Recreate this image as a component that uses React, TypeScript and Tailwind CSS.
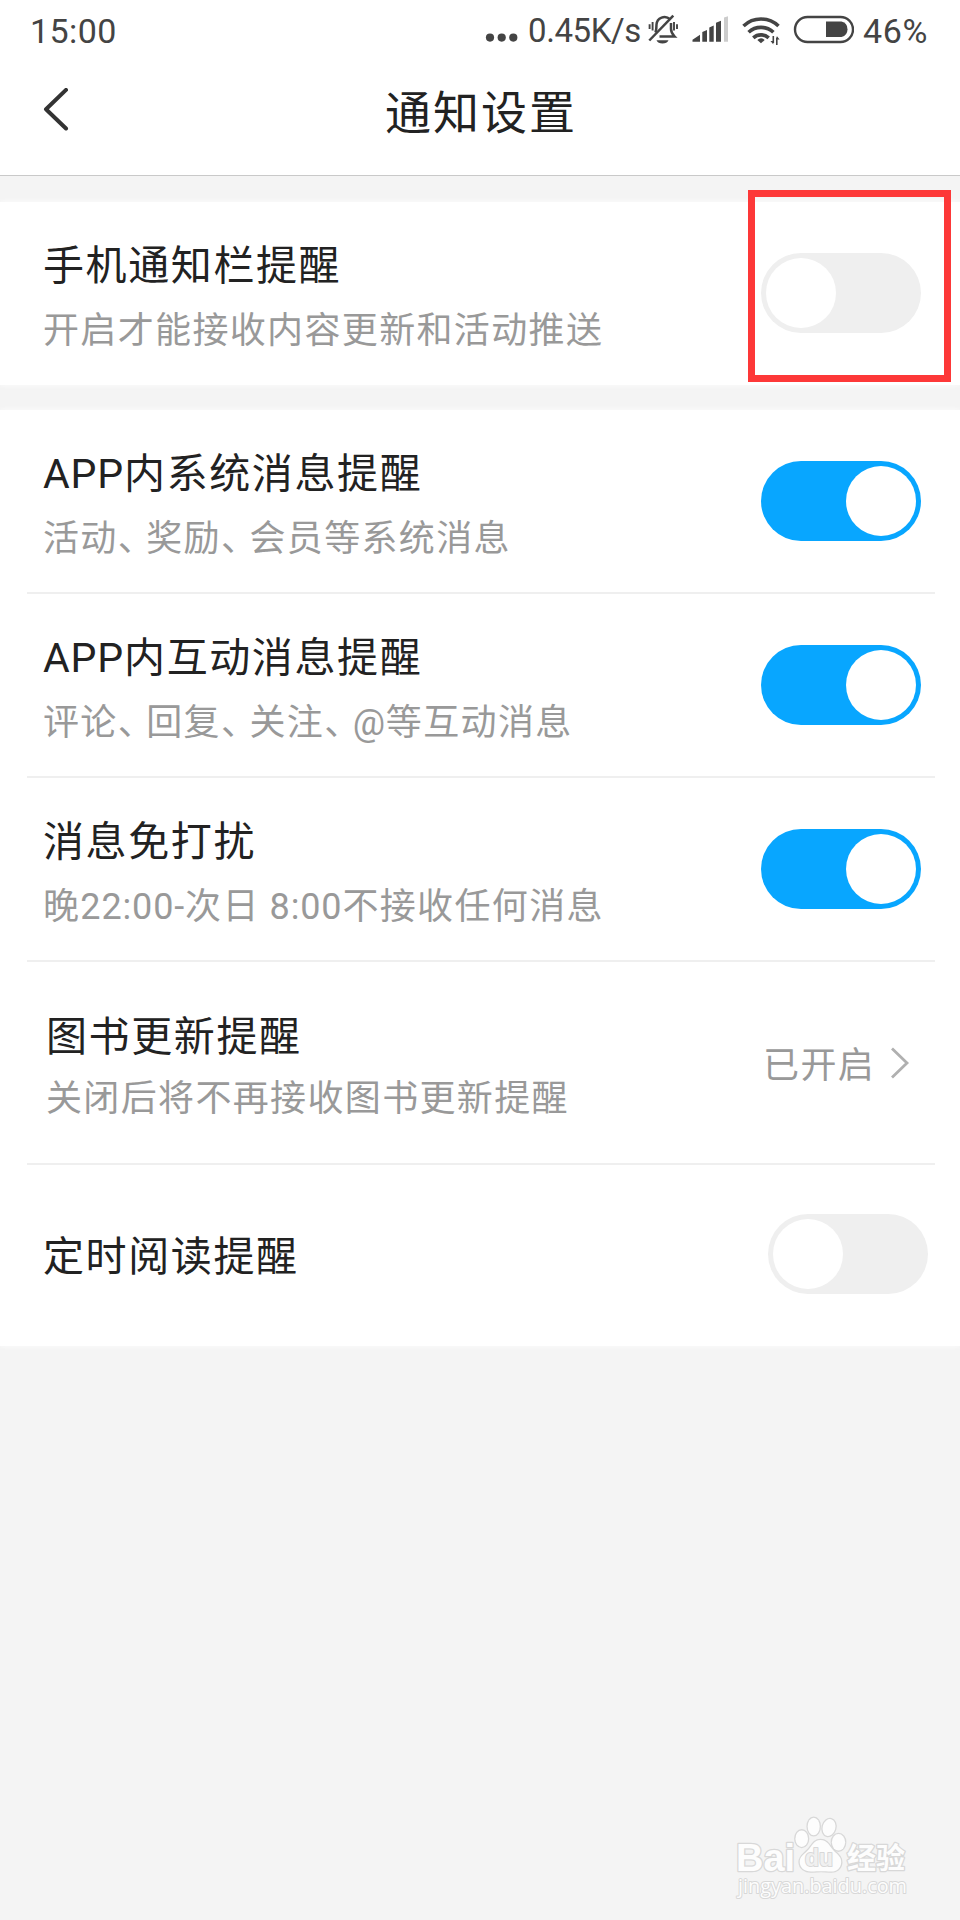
import clsx from "clsx";
import type { ReactNode } from "react";

function Toggle({ on }: { on?: boolean }) {
  return (
    <button
      role="switch"
      aria-checked={!!on}
      className={clsx(
        "w-40 h-20 rounded-full p-[5px] flex items-center flex-shrink-0",
        on ? "bg-[#08a6ff] justify-end" : "bg-[#efefef] justify-start",
      )}
    >
      <span className="w-[70px] h-[70px] rounded-full bg-white" />
    </button>
  );
}

function Divider() {
  return <div className="h-[2px] ml-[27px] mr-[25px] flex-shrink-0 bg-[#efefef]" />;
}

// Chinese commas are set narrower than a full em, latin runs with less tracking
function MixedText({ text }: { text: string }) {
  return (
    <>
      {text.split(/(、|[\x20-\x7e]+)/).map((part, i) => {
        if (part === "、") {
          return (
            <span key={i} className="-tracking-[7.5px]">
              {part}
            </span>
          );
        }
        if (/^[\x20-\x7e]+$/.test(part)) {
          return (
            <span key={i} className="tracking-[0.85px]">
              {part}
            </span>
          );
        }
        return part;
      })}
    </>
  );
}

interface RowProps {
  title: string;
  desc: string;
  className: string;
  children: ReactNode;
}

function Row({ title, desc, className, children }: RowProps) {
  return (
    <div className={clsx("flex justify-between items-center pl-[43px] pr-[39px]", className)}>
      <div className="pt-[11px]">
        <h2 className="text-[41px] leading-[64px] tracking-[1.6px] text-[#222] whitespace-nowrap">
          <MixedText text={title} />
        </h2>
        <p className="text-[36px] leading-[66px] tracking-[1.35px] text-[#999] whitespace-nowrap">
          <MixedText text={desc} />
        </p>
      </div>
      {children}
    </div>
  );
}

function StatusBar() {
  return (
    <div className="h-[60px] flex items-center pl-[30px] text-[34px] leading-[60px] text-[#444]">
      <span className="w-[455px] pt-[2px] tracking-[0.4px]">15:00</span>
      <svg width="33" height="60" viewBox="0 0 33 60" fill="#444">
        <circle cx="5" cy="37.6" r="4.1" />
        <circle cx="16.7" cy="37.6" r="4.1" />
        <circle cx="28.3" cy="37.6" r="4.1" />
      </svg>
      <span className="w-[129px] pl-[10px] pt-[2px] text-[33px] -tracking-[0.4px]">0.45K/s</span>

      {/* Muted bell */}
      <svg width="42" height="60" viewBox="0 0 42 60" fill="none" stroke="#444">
        <path d="M23 19.200a8 8 0 0 0-13.500 5.300c0 3.500-.2 5.500-1 8M24 23v6c0 3 1.200 5 3.600 7.500H12.500" strokeWidth="2.500" />
        <path d="M26.300 15.700 2.300 40.500" strokeWidth="2.500" />
        <path d="M5.600 22v8.500M2.600 24.300v4.700M27 22v8.500M30 24.300v4.700" strokeWidth="1.900" />
        <path d="M9.500 40.200h12q-1.500 3.200-6 3.200t-6-3.200" fill="#444" stroke="none" />
      </svg>

      {/* Signal */}
      <svg width="50" height="60" viewBox="0 0 50 60" fill="#444">
        <path d="M3.500 41.800v-2l7.500-5v7zM13.300 41.800V32l4.700-2v11.800zM20.300 41.800V27.500l4.400-2v16.300zM27 41.800v-19l5-2v21z" />
        <path d="M35 41.800V17.500l4-1.200v25.500z" fill="#ccc" />
      </svg>

      {/* Wifi */}
      <svg width="54" height="60" viewBox="0 0 54 60" fill="none" stroke="#444" strokeWidth="3.600">
        <path d="M4.500 26a25.500 25.500 0 0 1 35 0" />
        <path d="M9.600 32.300a18 18 0 0 1 24.800 0" />
        <path d="M14.300 37.800a11.500 11.500 0 0 1 15.400 0" />
        <path d="M18.300 40q3.700-3.400 7.400 0L22 43.300z" fill="#444" stroke="none" />
        <path d="M34.300 36v7M37.800 37.500V45" strokeWidth="1.600" />
        <path d="M34.300 44.500 31.500 41h2.800zM37.800 36l2.800 3.500h-2.800z" fill="#444" stroke="none" />
      </svg>

      {/* Battery */}
      <svg width="61" height="60" viewBox="0 0 61 60" fill="none">
        <rect x="2" y="17" width="58" height="25" rx="12.500" stroke="#444" strokeWidth="2.400" />
        <path d="M33 21.500h15.500a8 8 0 0 1 0 15.500H33z" fill="#444" />
      </svg>
      <span className="pl-[9px] pt-[2px] text-[34px] tracking-[0.6px]">46%</span>
    </div>
  );
}

function Watermark() {
  return (
    <svg
      className="absolute left-[700px] top-[1790px]"
      width="260"
      height="130"
      viewBox="0 0 260 130"
      fill="#fdfdfd"
      stroke="#d8d8d8"
      strokeWidth="2.600"
      strokeLinejoin="round"
      paintOrder="stroke"
    >
      <text x="36" y="80.500" fontSize="38" fontWeight="700" fontFamily="Liberation Sans" textLength="59" lengthAdjust="spacingAndGlyphs">
        Bai
      </text>
      <ellipse cx="101.700" cy="48.700" rx="6.300" ry="8.300" />
      <ellipse cx="113.700" cy="36.500" rx="6" ry="8.800" />
      <ellipse cx="129" cy="37.500" rx="6.300" ry="8.500" transform="rotate(15 129 37.500)" />
      <ellipse cx="138.500" cy="52.300" rx="6.600" ry="8.300" />
      <path d="M120.500 50c7 0 9 6 13 10.500 4 4 8 6.500 7.700 12-.4 6-5 9.500-11 9-5-.5-13-.5-18 0-7 .6-12.500-3.500-12.500-9.500 0-5.500 4-7.500 8-11.500s6-10.500 12.800-10.500z" />
      <text x="105" y="76" fontSize="23" fontFamily="Liberation Sans" fontWeight="700" fill="#f0f0f0" strokeWidth="2" textLength="28" lengthAdjust="spacingAndGlyphs">
        du
      </text>
      <text x="147" y="79" fontSize="29" fontWeight="700" fontFamily="Noto Sans CJK SC" textLength="58" lengthAdjust="spacingAndGlyphs">
        经验
      </text>
      <text x="38" y="103" fontSize="20" fontFamily="Open Sans" fontWeight="500" strokeWidth="2" textLength="169" lengthAdjust="spacingAndGlyphs">
        jingyan.baidu.com
      </text>
    </svg>
  );
}

export default function App() {
  return (
    <div className="relative w-[960px] h-[1920px] overflow-hidden bg-[#f4f4f4] font-['Roboto','Noto_Sans_CJK_SC',sans-serif]">
      <header className="h-[176px] bg-white border-b border-[#c9c9c9]">
        <StatusBar />
        <div className="grid grid-cols-[1fr_auto_1fr] items-center h-[102px]">
          <svg className="ml-[42px]" width="30" height="46" viewBox="0 0 30 46" fill="none" stroke="#333" strokeWidth="4" strokeLinecap="round" strokeLinejoin="round">
            <path d="M24 1.900 4 21.200 24 40.500" />
          </svg>
          <h1 className="pl-[2px] pt-[3px] text-[46px] leading-[60px] tracking-[2px] text-[#222]">
            通知设置
          </h1>
        </div>
      </header>

      <section className="mt-[26px] h-[183px] bg-white shadow-[0_0_5px_#fdfdfd]">
        <Row title="手机通知栏提醒" desc="开启才能接收内容更新和活动推送" className="h-[182px]">
          <Toggle />
        </Row>
      </section>

      <section className="mt-[25px] bg-white shadow-[0_0_5px_#fdfdfd]">
        <Row title="APP内系统消息提醒" desc="活动、奖励、会员等系统消息" className="h-[182px]">
          <Toggle on />
        </Row>
        <Divider />
        <Row title="APP内互动消息提醒" desc="评论、回复、关注、@等互动消息" className="h-[182px]">
          <Toggle on />
        </Row>
        <Divider />
        <Row title="消息免打扰" desc="晚22:00-次日 8:00不接收任何消息" className="h-[182px]">
          <Toggle on />
        </Row>
        <Divider />
        <div className="h-[201px] flex items-center justify-between pl-[46px] pr-[49px]">
          <div className="pt-[10px]">
            <h2 className="text-[41px] leading-[62px] tracking-[1.6px] text-[#222]">图书更新提醒</h2>
            <p className="text-[36px] leading-[62px] tracking-[1.35px] text-[#999]">
              关闭后将不再接收图书更新提醒
            </p>
          </div>
          <div className="flex items-center text-[36px] text-[#999]">
            <span className="pt-[6px] tracking-[1.3px]">已开启</span>
            <svg className="ml-[14px]" width="22" height="34" viewBox="0 0 22 34" fill="none" stroke="#b0b0b0" strokeWidth="2.800">
              <path d="M3 2.500 18 17 3 31.500" />
            </svg>
          </div>
        </div>
        <Divider />
        <div className="h-[181px] flex items-center justify-between pl-[43px] pr-[32px] pb-[3px]">
          <h2 className="pt-[5px] text-[41px] leading-[64px] tracking-[1.6px] text-[#222]">
            定时阅读提醒
          </h2>
          <Toggle />
        </div>
      </section>

      {/* Highlight around the first switch */}
      <div className="absolute left-[748px] top-[190px] w-[203px] h-[192px] border-[7px] border-[#fd3838]" />
      <Watermark />
    </div>
  );
}
